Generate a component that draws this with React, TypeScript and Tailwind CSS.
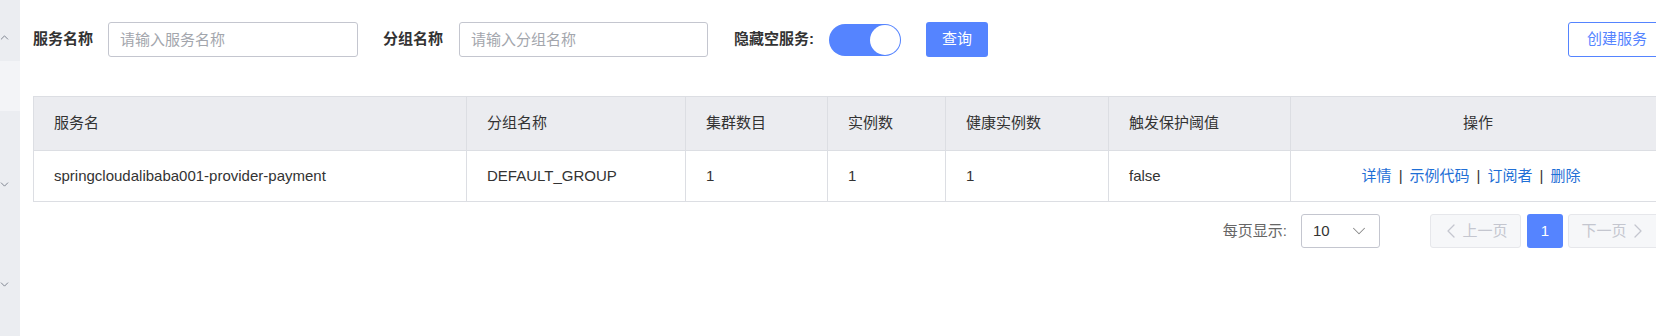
import { ChevronDown, ChevronLeft, ChevronRight, ChevronUp } from 'lucide-react';

const font = 'font-["Liberation_Sans","Noto_Sans_CJK_SC",sans-serif]';

const columns = ['服务名', '分组名称', '集群数目', '实例数', '健康实例数', '触发保护阈值'];
const row = ['springcloudalibaba001-provider-payment', 'DEFAULT_GROUP', '1', '1', '1', 'false'];
const actions = ['详情', '示例代码', '订阅者', '删除'];

const gridCols = 'grid grid-cols-[432px_219px_142px_118px_163px_182px_1fr]';

const App = () => {
  return (
    <div className={`${font} flex w-[1656px] h-[336px] overflow-hidden bg-white text-[15px] text-[#333]`}>
      {/* 左侧折叠的导航栏 */}
      <div className="w-[20px] shrink-0 bg-[#ebedf1] flex flex-col">
        <div className="h-[61px] pt-[31px] text-[#6f7683]">
          <ChevronUp size={13} strokeWidth={1.6} className="-ml-[2px]" />
        </div>
        <div className="h-[50px] bg-[#f3f4f7]" />
        <div className="pt-[67px] text-[#6f7683]">
          <ChevronDown size={13} strokeWidth={1.6} className="-ml-[2px]" />
        </div>
        <div className="pt-[87px] text-[#6f7683]">
          <ChevronDown size={13} strokeWidth={1.6} className="-ml-[2px]" />
        </div>
      </div>

      {/* 主体内容 */}
      <div className="ml-[13px] w-[1633px] shrink-0">
        {/* 查询条件 */}
        <div className="mt-[22px] flex items-center h-[35px]">
          <span className="w-[75px] font-bold text-[#333]">服务名称</span>
          <input
            className="w-[250px] h-[35px] border border-[#c4c6cf] rounded-[3px] px-[11px] outline-none placeholder:text-[#a3a6ad]"
            placeholder="请输入服务名称"
          />
          <span className="ml-[25px] w-[76px] font-bold text-[#333]">分组名称</span>
          <input
            className="w-[249px] h-[35px] border border-[#c4c6cf] rounded-[3px] px-[11px] outline-none placeholder:text-[#a3a6ad]"
            placeholder="请输入分组名称"
          />
          <span className="ml-[26px] w-[95px] font-bold text-[#333]">隐藏空服务:</span>
          <div className="w-[72px] h-[32px] rounded-full bg-[#5584ff] flex items-center justify-end pr-[1px]">
            <div className="w-[30px] h-[30px] rounded-full bg-white" />
          </div>
          <button className="ml-[25px] w-[62px] h-[35px] rounded-[3px] bg-[#5584ff] text-white">查询</button>
          <button className="ml-auto w-[98px] h-[35px] rounded-[3px] border border-[#5584ff] text-[#5584ff] bg-white">
            创建服务
          </button>
        </div>

        {/* 服务列表 */}
        <div className="mt-[39px] border border-[#dcdee3]">
          <div className={`${gridCols} h-[53px] bg-[#ebecf0]`}>
            {columns.map((c, i) => (
              <div key={c} className={`flex items-center pl-[20px] ${i > 0 ? 'border-l border-[#dcdee3]' : ''}`}>
                {c}
              </div>
            ))}
            <div className="flex items-center justify-center border-l border-[#dcdee3]">操作</div>
          </div>
          <div className={`${gridCols} h-[51px] border-t border-[#dcdee3]`}>
            {row.map((c, i) => (
              <div key={i} className={`flex items-center pl-[20px] ${i > 0 ? 'border-l border-[#dcdee3]' : ''}`}>
                {c}
              </div>
            ))}
            <div className="flex items-center justify-center border-l border-[#dcdee3] pr-[14px]">
              {actions.map((a, i) => (
                <span key={a} className="flex items-center">
                  {i > 0 && <span className="px-[7px] text-[#333]">|</span>}
                  <a className="text-[#1f6fd6] cursor-pointer">{a}</a>
                </span>
              ))}
            </div>
          </div>
        </div>

        {/* 分页 */}
        <div className="mt-[12px] flex items-center justify-end h-[34px] pr-[7px]">
          <span className="text-[#666] mr-[14px]">每页显示:</span>
          <div className="w-[79px] h-[34px] border border-[#c4c6cf] rounded-[3px] flex items-center justify-between pl-[11px] pr-[9px]">
            <span className="text-[#333]">10</span>
            <ChevronDown size={22} strokeWidth={1.1} className="text-[#888]" />
          </div>
          <button className="ml-[50px] w-[91px] h-[34px] rounded-[3px] border border-[#e6e7eb] bg-[#f6f7f9] text-[#c4c6cf] flex items-center justify-center">
            <ChevronLeft size={24} strokeWidth={1.3} className="-ml-[4px] -mr-[1px]" />
            <span>上一页</span>
          </button>
          <button className="ml-[6px] w-[36px] h-[34px] rounded-[3px] bg-[#5584ff] text-white">1</button>
          <button className="ml-[5px] w-[91px] h-[34px] rounded-[3px] border border-[#e6e7eb] bg-[#f6f7f9] text-[#c4c6cf] flex items-center justify-center">
            <span>下一页</span>
            <ChevronRight size={24} strokeWidth={1.3} className="-ml-[1px] -mr-[4px]" />
          </button>
        </div>
      </div>
    </div>
  );
};

export default App;
